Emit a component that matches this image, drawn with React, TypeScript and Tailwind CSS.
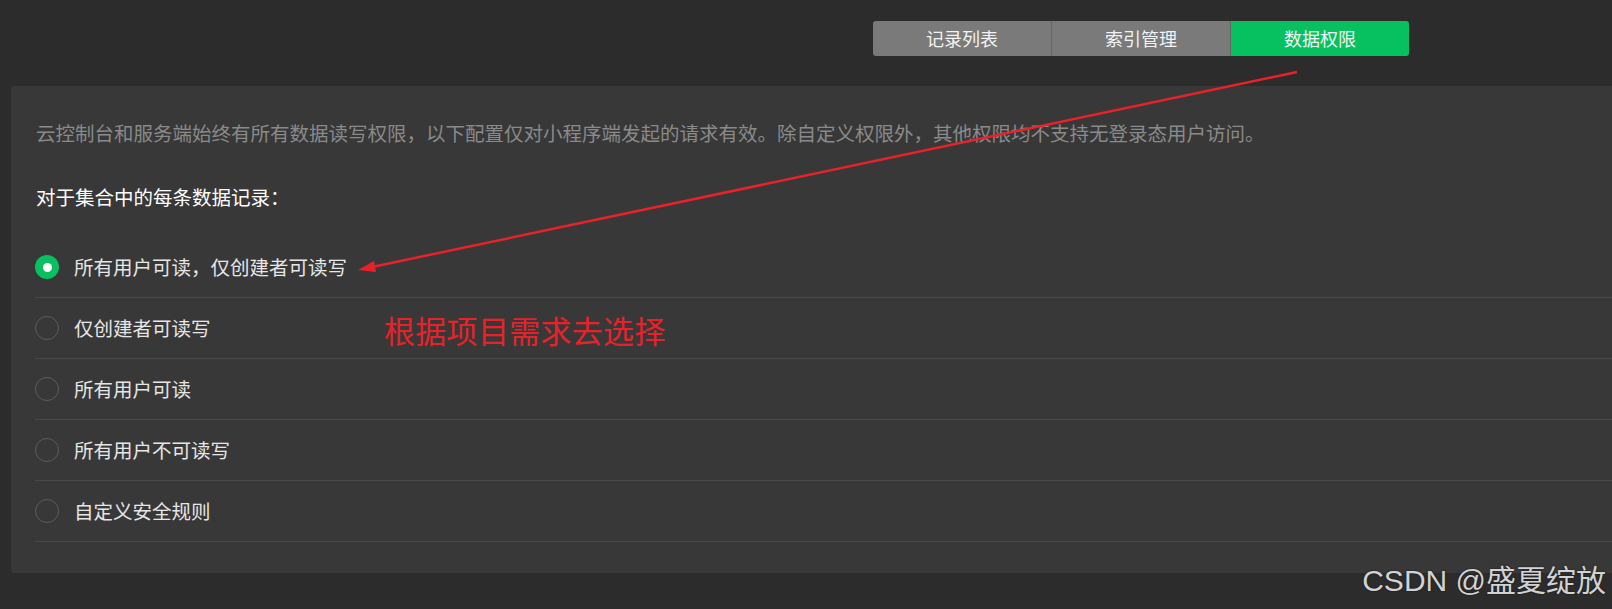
import React from 'react';

const tabs = ['记录列表', '索引管理', '数据权限'];

const options = [
  '所有用户可读，仅创建者可读写',
  '仅创建者可读写',
  '所有用户可读',
  '所有用户不可读写',
  '自定义安全规则',
];

const font = { fontFamily: '"Noto Sans CJK SC", "Noto Sans", sans-serif' };

function Radio({ checked }: { checked: boolean }) {
  if (checked) {
    return (
      <span className="flex h-[24px] w-[24px] shrink-0 items-center justify-center rounded-full bg-[#07c160]">
        <span className="h-[9px] w-[9px] rounded-full bg-white" />
      </span>
    );
  }
  return <span className="h-[24px] w-[24px] shrink-0 rounded-full border border-[#5c5c5c]" />;
}

export default function App() {
  return (
    <div className="relative h-[609px] w-[1612px] overflow-hidden bg-[#2c2c2c]" style={font}>
      {/* tabs */}
      <div className="pl-[873px] pt-[21px]">
        <div className="flex h-[35px] w-[536px] overflow-hidden rounded-[3px]">
          {tabs.map((t, i) => (
            <div
              key={t}
              className={
                i === 2
                  ? 'flex flex-1 items-center justify-center bg-[#07c160] text-[18px] text-[#f4f4f4]'
                  : 'flex flex-1 items-center justify-center border-r border-[#666666] bg-[#7a7a7a] text-[18px] text-[#f2f2f2]'
              }
            >
              {t}
            </div>
          ))}
        </div>
      </div>

      {/* panel */}
      <div className="ml-[11px] mt-[30px] h-[487px] rounded-tl-[3px] rounded-bl-[3px] bg-[#383838] pl-[24px] pt-[33px]">
        <p className="pl-[1px] text-[19.5px] leading-[28px] text-[#8a8a8a]">
          云控制台和服务端始终有所有数据读写权限，以下配置仅对小程序端发起的请求有效。除自定义权限外，其他权限均不支持无登录态用户访问。
        </p>
        <p className="mt-[36px] pl-[1px] text-[19.5px] leading-[28px] text-white">对于集合中的每条数据记录：</p>
        <div className="mt-[26px]">
          {options.map((o, i) => (
            <div key={o} className="flex h-[61px] items-center gap-[15px] border-b border-[#4a4a4a]">
              <Radio checked={i === 0} />
              <span className="text-[19.5px] text-[#e6e6e6]">{o}</span>
            </div>
          ))}
        </div>
      </div>

      {/* annotation: arrow */}
      <svg className="pointer-events-none absolute left-0 top-0" width="1612" height="609">
        <line x1="1297" y1="72" x2="372" y2="267" stroke="#e8222a" strokeWidth="2.5" />
        <polygon points="358,270 374,261 376,272" fill="#e8222a" />
      </svg>

      {/* annotation: red text */}
      <div className="absolute left-[384px] top-[311px] text-[31px] leading-[38px] tracking-[0.3px] text-[#e8222a]">
        根据项目需求去选择
      </div>

      {/* watermark */}
      <div
        className="absolute right-[6px] top-[562px] text-[30px] leading-[38px] text-[#d2d2d2] [text-shadow:0_0_2px_rgba(0,0,0,0.6)]"
        style={{ fontFamily: '"Liberation Sans", "Noto Sans CJK SC", sans-serif' }}
      >
        CSDN @盛夏绽放
      </div>
    </div>
  );
}
